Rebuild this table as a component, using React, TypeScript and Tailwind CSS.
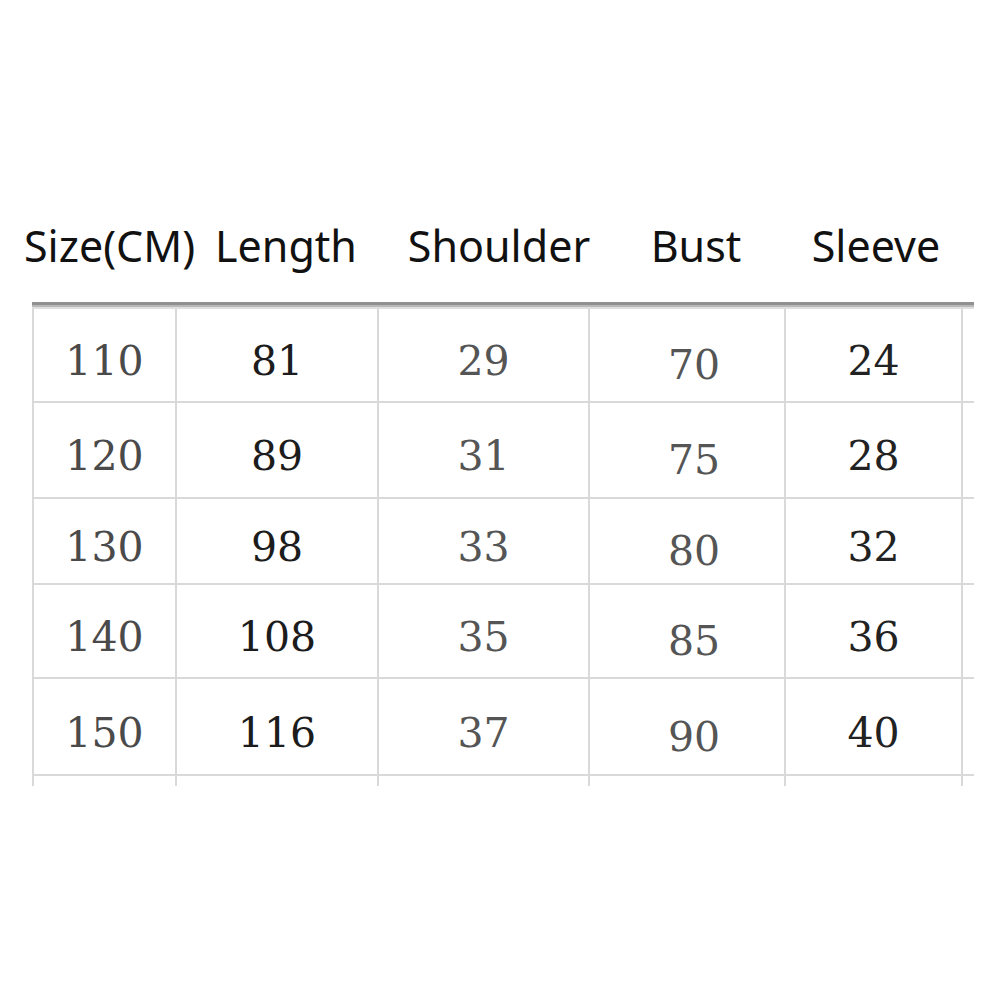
const rows = [
  { h: "h-[94px]", cells: ["110", "81", "29", "70", "24"] },
  { h: "h-[96px]", cells: ["120", "89", "31", "75", "28"] },
  { h: "h-[86px]", cells: ["130", "98", "33", "80", "32"] },
  { h: "h-[94px]", cells: ["140", "108", "35", "85", "36"] },
  { h: "h-[97px]", cells: ["150", "116", "37", "90", "40"] },
]

const colWidths = ["w-[143px]", "w-[202px]", "w-[211px]", "w-[196px]", "w-[177px]"]
// darker ink in the Length and Sleeve columns, as in the scan
const colText = ["text-[#4a4a4a]", "text-[#1c1c1c]", "text-[#555555]", "text-[#555555]", "text-[#222222]"]
const colPad = ["pt-[14px]", "pt-[14px]", "pt-[14px]", "pt-[22px] pl-[14px]", "pt-[14px]"]

export default function App() {
  return (
    <div className="w-[1001px] h-[1001px] bg-white pt-[224px]">
      {/* header labels */}
      <div className="flex h-[44px] text-[43px] leading-none text-[#111] font-['Noto_Sans',sans-serif] whitespace-nowrap">
        <div className="w-[193px] pl-[24px]">Size(CM)</div>
        <div className="w-[186px] text-center">Length</div>
        <div className="w-[240px] text-center">Shoulder</div>
        <div className="w-[154px] text-center">Bust</div>
        <div className="w-[206px] text-center">Sleeve</div>
      </div>

      {/* table */}
      <div className="ml-[32px] mt-[34px] w-[942px]">
        <div className="h-[3px] bg-[#909090]" />
        <div className="h-[2px] bg-[#b8b8b8]" />
        <div className="h-[2px] bg-[#e0e0e0]" />
        {rows.map((row, i) => (
          <div key={i} className={`flex ${row.h}`}>
            {row.cells.map((c, j) => (
              <div
                key={j}
                className={`${colWidths[j]} ${colText[j]} ${colPad[j]} flex items-center justify-center border-l-2 border-b-2 border-[#d9d9d9] text-[41px] font-['DejaVu_Serif',serif]`}
              >
                {c}
              </div>
            ))}
            <div className="w-[13px] border-l-2 border-b-2 border-[#d9d9d9]" />
          </div>
        ))}
        {/* vertical rules run a little past the last row */}
        <div className="flex h-[10px]">
          {colWidths.map((w, j) => (
            <div key={j} className={`${w} border-l-2 border-[#d9d9d9]`} />
          ))}
          <div className="w-[13px] border-l-2 border-[#d9d9d9]" />
        </div>
      </div>
    </div>
  )
}
